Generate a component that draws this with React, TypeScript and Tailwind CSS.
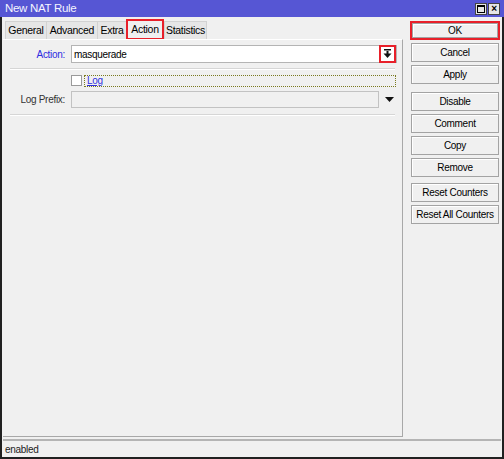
import React from 'react';

const font = "font-['Liberation_Sans',Arial,sans-serif] tracking-[-0.3px]";

const Btn: React.FC<{ label: string; hot?: boolean }> = ({ label, hot }) => (
    <div className={hot ? 'border-2 border-[#e8202a] p-0' : 'px-[1px]'}>
        <div
            className={`flex items-center justify-center whitespace-nowrap border border-[#a3a3a3] bg-[#f0f0f0] shadow-[inset_1px_1px_0_#ffffff] text-[10px] text-black ${hot ? 'h-[15px]' : 'h-[19px]'}`}
        >
            {label}
        </div>
    </div>
);

const Tab: React.FC<{ label: string; w: string; active?: boolean }> = ({ label, w, active }) =>
    active ? (
        <div className={`${w} border-2 border-[#e8202a] h-[21px] -mb-[1px] flex items-center justify-center bg-[#f0f0f0] text-[10.5px]`}>
            {label}
        </div>
    ) : (
        <div className={`${w} h-[18px] flex items-center justify-center border border-b-0 border-[#d2d2d2] bg-[#e6e6e6] text-[10.5px] -mr-[1px]`}>
            {label}
        </div>
    );

const Separator = () => <div className="mx-[7px] h-[2px] border-t border-[#d6d6d6] border-b border-b-white" />;

export default function App() {
    return (
        <div className={`w-[504px] h-[459px] bg-[#1c1c1c] ${font}`}>
            <div className="w-[504px] h-[459px] flex flex-col bg-[#f0f0f0] border-l-[2px] border-r-[2px] border-b-[2px] border-[#202020]">
                {/* title bar */}
                <div className="h-[17px] -mx-[2px] bg-[#5656d4] flex items-center justify-between pl-[5px] pr-[4px]">
                    <span className="text-[11.5px] text-[#f4f4ff] leading-none">New NAT Rule</span>
                    <div className="flex gap-[1px]">
                        <div className="w-[12px] h-[12px] bg-[#e6e6e6] border border-[#444] flex items-center justify-center">
                            <div className="w-[8px] h-[8px] border border-black border-t-2" />
                        </div>
                        <div className="w-[12px] h-[12px] bg-[#e6e6e6] border border-[#444] flex items-center justify-center text-[10px] font-bold leading-none">
                            ×
                        </div>
                    </div>
                </div>

                <div className="flex flex-1">
                    {/* left side: tabs + panel */}
                    <div className="w-[401px] flex flex-col pl-[1px] pt-[2px]">
                        <div className="flex items-end h-[20px] pl-[2px]">
                            <Tab label="General" w="w-[42px]" />
                            <Tab label="Advanced" w="w-[52px]" />
                            <Tab label="Extra" w="w-[30px]" />
                            <Tab label="Action" w="w-[38px]" active />
                            <Tab label="Statistics" w="w-[43px]" />
                        </div>
                        <div className="flex-1 border-t border-t-white border-r border-b border-[#a8a8a8] flex flex-col">
                            {/* Action row */}
                            <div className="flex items-center mt-[5px] h-[18px]">
                                <div className="w-[63px] text-right text-[10px] text-[#2d2de0] pr-[1px]">Action:</div>
                                <div className="ml-[5px] w-[326px] h-[18px] bg-white border border-[#b4b4b4] flex items-center justify-between pl-[2px]">
                                    <span className="text-[10px] text-black">masquerade</span>
                                    <div className="w-[17px] h-[18px] border-2 border-[#e8202a] flex items-center justify-center bg-white">
                                        <svg width="9" height="10" viewBox="0 0 9 10">
                                            <rect x="1" y="0" width="7" height="1.5" fill="#111" />
                                            <rect x="3.5" y="2" width="2" height="3" fill="#111" />
                                            <path d="M0.5 4.5 H8.5 L4.5 9 Z" fill="#111" />
                                        </svg>
                                    </div>
                                </div>
                            </div>
                            <div className="mt-[5px]">
                                <Separator />
                            </div>
                            {/* Log row */}
                            <div className="flex items-center mt-[4px] h-[13px]">
                                <div className="w-[68px]" />
                                <div className="w-[11px] h-[11px] bg-white border border-[#9a9a9a]" />
                                <div className="ml-[2px] w-[312px] h-[12px] border border-dotted border-[#7a7a20] flex items-center pl-[2px]">
                                    <span className="text-[10px] leading-none text-[#3030e0] underline">Log</span>
                                </div>
                            </div>
                            {/* Log Prefix row */}
                            <div className="flex items-center mt-[4px] h-[17px]">
                                <div className="w-[63px] text-right text-[10px] text-[#333] pr-[1px]">Log Prefix:</div>
                                <div className="ml-[5px] w-[308px] h-[17px] bg-[#f0f0f0] border border-[#c2c2c2]" />
                                <svg className="ml-[6px]" width="9" height="5" viewBox="0 0 9 5">
                                    <path d="M0 0 H9 L4.5 5 Z" fill="#111" />
                                </svg>
                            </div>
                            <div className="mt-[6px]">
                                <Separator />
                            </div>
                        </div>
                    </div>

                    {/* right buttons */}
                    <div className="flex-1 flex flex-col pl-[7px] pr-[2px] pt-[4px]">
                        <Btn label="OK" hot />
                        <div className="flex flex-col gap-[3px] mt-[3px]">
                            <Btn label="Cancel" />
                            <Btn label="Apply" />
                        </div>
                        <div className="flex flex-col gap-[3px] mt-[8px]">
                            <Btn label="Disable" />
                            <Btn label="Comment" />
                            <Btn label="Copy" />
                            <Btn label="Remove" />
                        </div>
                        <div className="flex flex-col gap-[3px] mt-[6px]">
                            <Btn label="Reset Counters" />
                            <Btn label="Reset All Counters" />
                        </div>
                    </div>
                </div>

                {/* status bar */}
                <div className="h-[18px] mt-[2px] mx-[1px] border-t-2 border-[#b4b4b4] flex items-center pl-[2px]">
                    <span className="text-[10px] text-[#222]">enabled</span>
                </div>
            </div>
        </div>
    );
}
